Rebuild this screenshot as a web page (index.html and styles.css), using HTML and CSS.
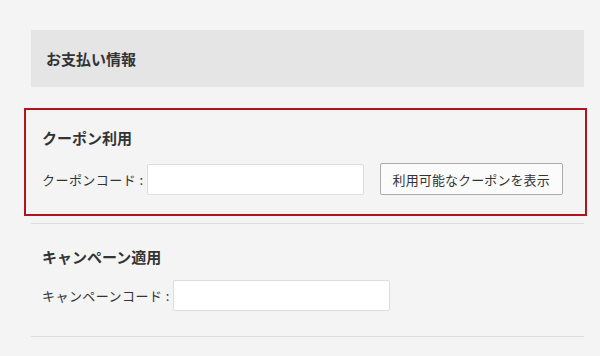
FILE: index.html
```html
<!DOCTYPE html>
<html lang="ja">
<head>
  <meta charset="UTF-8">
  <meta name="viewport" content="width=device-width, initial-scale=1">
  <title>お支払い情報</title>
  <link rel="stylesheet" href="styles.css">
</head>
<body>

  <div class="payment">
    <h2 class="payment-title">お支払い情報</h2>

    <div class="section coupon">
      <h3>クーポン利用</h3>
      <div class="field">
        <label for="coupon">クーポンコード :</label>
        <input type="text" id="coupon" />
        <button type="button">利用可能なクーポンを表示</button>
      </div>
    </div>

    <div class="section campaign">
      <h3>キャンペーン適用</h3>
      <div class="field">
        <label for="campaign">キャンペーンコード :</label>
        <input type="text" id="campaign" />
      </div>
    </div>
  </div>

</body>
</html>
```

FILE: styles.css
```css
body {
  font-family: "Noto Sans CJK JP", "Noto Sans", sans-serif;
  background: #f4f4f4;
  color: #333;
  margin: 0;
  padding: 30px 0 0 31px;
}
.payment {
  width: 553px;
}
.payment-title {
  margin: 0;
  height: 57px;
  line-height: 57px;
  padding-left: 15px;
  background: #e5e5e6;
  font-size: 15px;
  font-weight: bold;
}
.section h3 {
  margin: 0;
  font-size: 15px;
  line-height: 20px;
  font-weight: bold;
}
.field {
  display: flex;
  align-items: center;
  font-size: 13px;
}
.field label {
  margin-right: 3px;
  letter-spacing: 0.45px;
}
input {
  width: 217px;
  height: 31px;
  box-sizing: border-box;
  border: 1px solid #ddd;
  background: white;
  border-radius: 2px;
}
button {
  margin-left: 16px;
  height: 32px;
  padding: 0 12px;
  font-family: inherit;
  font-size: 13px;
  letter-spacing: 0.1px;
  color: #333;
  background: #fbfbfb;
  border: 1px solid #aaa;
  border-radius: 2px;
  cursor: pointer;
}
.coupon {
  margin: 21px -3px 0 -7px;
  padding: 18px 0 19px 16px;
  border: 2px solid #b0141c;
}
.coupon .field {
  margin-top: 15px;
}
.campaign {
  margin-top: 7px;
  padding: 23px 0 25px 11px;
  border-top: 1px solid #ddd;
  border-bottom: 1px solid #ddd;
}
.campaign .field {
  margin-top: 13px;
}
```
